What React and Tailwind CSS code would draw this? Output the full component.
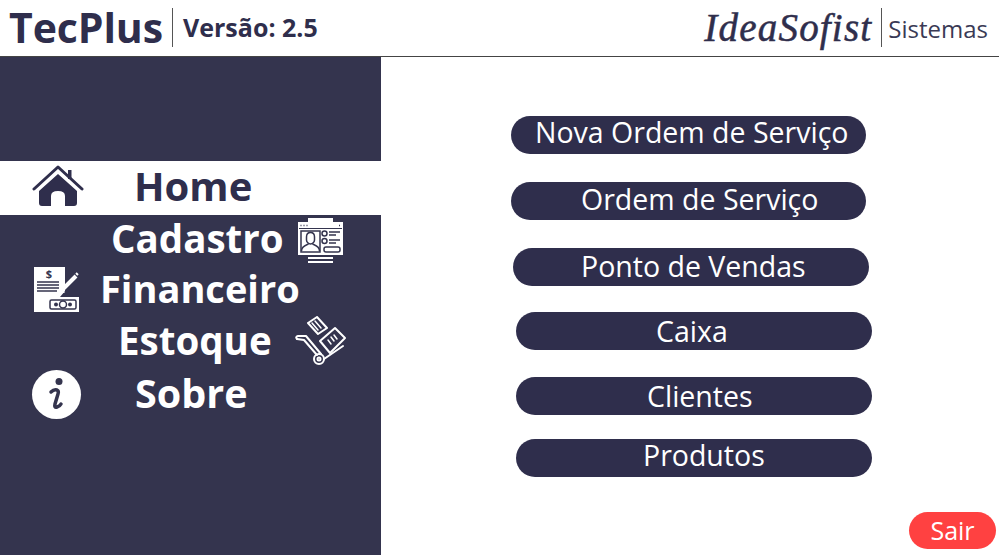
import React from "react";

const sans = "font-['Open_Sans','Noto_Sans',sans-serif]";

const HomeIcon = () => (
  <svg width="52" height="42" viewBox="0 0 52 42" className="text-[#2f2e4c]">
    <path d="M2 24 L26 2 L50 24" fill="none" stroke="currentColor" strokeWidth="3" strokeLinecap="round" strokeLinejoin="round" />
    <path d="M36 5h3.500v9h-3.500z" fill="currentColor" />
    <path d="M26 9 L45 26 V38 Q45 41 42 41 H33 V31 Q33 26 26 26 Q19 26 19 31 V41 H10 Q7 41 7 38 V26 Z" fill="currentColor" />
  </svg>
);

const CadastroIcon = () => (
  <svg width="46" height="46" viewBox="0 0 46 46" fill="none">
    <rect x="10" y="1" width="25" height="4" fill="#fff" />
    <rect x="10" y="40" width="25" height="2" fill="#fff" />
    <rect x="10" y="44" width="25" height="2" fill="#fff" />
    <rect x="0" y="5" width="45" height="33" fill="#fff" />
    <path d="M1 11.500h43" stroke="#34344e" strokeWidth="1" />
    <path d="M2.500 8.500h1M5.500 8.500h1M8.500 8.500h1M41 8.500h1" stroke="#34344e" strokeWidth="1.500" />
    <g stroke="#34344e" strokeWidth="1.500">
      <rect x="3" y="14" width="19" height="21" />
      <path d="M8.500 20c0-6 8-6 8 0v3c0 2-2 4-4 4s-4-2-4-4z" />
      <path d="M3.500 34c0-5 5-6 7-7M21.500 34c0-5-5-6-7-7" />
      <circle cx="26.500" cy="16.500" r="2.500" />
      <circle cx="26.500" cy="24" r="2.500" />
      <path d="M31 15h11M31 18h7M31 23h11M31 26h7" />
      <rect x="26" y="30" width="16" height="5" rx="2" />
    </g>
  </svg>
);

const FinanceiroIcon = () => (
  <svg width="46" height="46" viewBox="0 0 46 46">
    <path d="M0 0h31v24l-5 6H13v15H0z" fill="#fff" />
    <path d="M3 15h22M3 18h22M3 21h22M3 24h20" stroke="#34344e" strokeWidth="1.500" />
    <text x="15" y="11" fontSize="11" fontWeight="700" fill="#34344e" textAnchor="middle" fontFamily="Open Sans, sans-serif">$</text>
    <path d="M29 22 L42 9" stroke="#fff" strokeWidth="4" />
    <path d="M26 27l1.500-5 3.500 3.500z" fill="#fff" />
    <path d="M42 6l2 2" stroke="#fff" strokeWidth="2" />
    <rect x="13" y="30" width="32" height="15" fill="#fff" />
    <rect x="16" y="33" width="26" height="9" rx="1.500" fill="none" stroke="#34344e" strokeWidth="1.500" />
    <circle cx="29" cy="37.500" r="3.500" fill="none" stroke="#34344e" strokeWidth="1.500" />
    <circle cx="22" cy="37.500" r="2" fill="#34344e" />
    <circle cx="36" cy="37.500" r="2" fill="#34344e" />
  </svg>
);

const EstoqueIcon = () => (
  <svg width="52" height="52" viewBox="10 8 52 52" fill="none" stroke="#fff" strokeWidth="2" strokeLinejoin="round" strokeLinecap="round">
    <path d="M23 15 L32 9 L42 20 L33 26 Z" />
    <path d="M27 15l6 7M30 13l6 7" strokeWidth="1.500" />
    <path d="M35 33 L50 20 L60 30 L45 45 Z" />
    <path d="M43 32l3 4M46 29l3 4M49 27l3 4" strokeWidth="1.500" />
    <path d="M12 31 Q10 29 13 28 L21 28 L36 46" />
    <path d="M12 31 L19 32 L32 47" />
    <path d="M39 51 L58 38" />
    <circle cx="34" cy="51" r="5" />
    <circle cx="34" cy="51" r="1.500" />
  </svg>
);

const InfoIcon = () => (
  <div className="flex h-[49px] w-[49px] items-center justify-center rounded-full bg-white">
    <svg width="18" height="36" viewBox="0 0 18 36">
      <circle cx="11" cy="5.500" r="3.500" fill="#34344e" />
      <path d="M3 16 Q6 13 9 14 Q11 15 10 18 L7 28 Q6 32 9 31 Q12 30 13 28" fill="none" stroke="#34344e" strokeWidth="3.500" strokeLinecap="round" />
    </svg>
  </div>
);

const botoes = [
  { label: "Nova Ordem de Serviço", box: "mt-[59px] ml-[130px] w-[355px] pb-[6px]", text: "pl-[24px]" },
  { label: "Ordem de Serviço", box: "mt-[28px] ml-[130px] w-[355px] pb-[4px]", text: "pl-[70px]" },
  { label: "Ponto de Vendas", box: "mt-[28px] ml-[132px] w-[356px] pb-[2px]", text: "pl-[68px]" },
  { label: "Caixa", box: "mt-[26px] ml-[135px] w-[356px]", text: "pl-[140px]" },
  { label: "Clientes", box: "mt-[27px] ml-[135px] w-[356px]", text: "pl-[131px]" },
  { label: "Produtos", box: "mt-[24px] ml-[135px] w-[356px] pb-[6px]", text: "pl-[127px]" },
];

export default function App() {
  return (
    <div className={`flex h-[555px] w-[999px] flex-col overflow-hidden bg-white text-[#2f2e4c] ${sans}`}>
      {/* Header */}
      <header className="flex h-[57px] shrink-0 items-center border-b border-[#444] pb-[2px]">
        <span className="ml-[9px] w-[163px] text-[41px] font-bold leading-none tracking-[-0.1px]">TecPlus</span>
        <div className="h-[39px] w-px bg-[#555]" />
        <span className="ml-[10px] text-[25px] font-bold leading-none">Versão: 2.5</span>
        <span className="ml-auto font-['Liberation_Serif',serif] text-[39px] italic leading-none tracking-[1.200px] [-webkit-text-stroke:0.5px_#2f2e4c]">IdeaSofist</span>
        <div className="ml-[9px] h-[39px] w-px bg-[#555]" />
        <span className="ml-[6px] mr-[11px] mt-[3px] text-[24px] leading-none text-[#3a3a55]">Sistemas</span>
      </header>

      <div className="flex flex-1">
        {/* Sidebar */}
        <aside className="w-[381px] shrink-0 bg-[#34344e] pt-[104px] text-[38px] font-bold leading-none text-white">
          <div className="flex h-[54px] items-center bg-white pb-[4px] pl-[32px] text-[#2f2e4c]">
            <HomeIcon />
            <span className="ml-[50px] text-[40px]">Home</span>
          </div>
          <div className="mt-px flex h-[48px] items-center pl-[111px]">
            <span className="w-[187px] pb-[4px] text-[38.500px]">Cadastro</span>
            <CadastroIcon />
          </div>
          <div className="flex h-[52px] items-center pl-[34px]">
            <FinanceiroIcon />
            <span className="ml-[20px] pb-[4px]">Financeiro</span>
          </div>
          <div className="flex h-[52px] items-center pl-[118px]">
            <span className="w-[177px] pb-[4px] text-[38.500px]">Estoque</span>
            <EstoqueIcon />
          </div>
          <div className="flex h-[52px] items-center pl-[32px]">
            <InfoIcon />
            <span className="ml-[54px] text-[39.500px]">Sobre</span>
          </div>
        </aside>

        {/* Main */}
        <main className="relative flex-1">
          {botoes.map((b) => (
            <div
              key={b.label}
              className={`flex h-[38px] items-center rounded-full bg-[#2f2e4c] text-[28.500px] leading-none text-white ${b.box} ${b.text}`}
            >
              {b.label}
            </div>
          ))}
          <button className="absolute bottom-[6px] right-[3px] flex h-[37px] w-[87px] items-center justify-center rounded-full bg-[#ff4141] text-[25px] leading-none text-white">
            Sair
          </button>
        </main>
      </div>
    </div>
  );
}
